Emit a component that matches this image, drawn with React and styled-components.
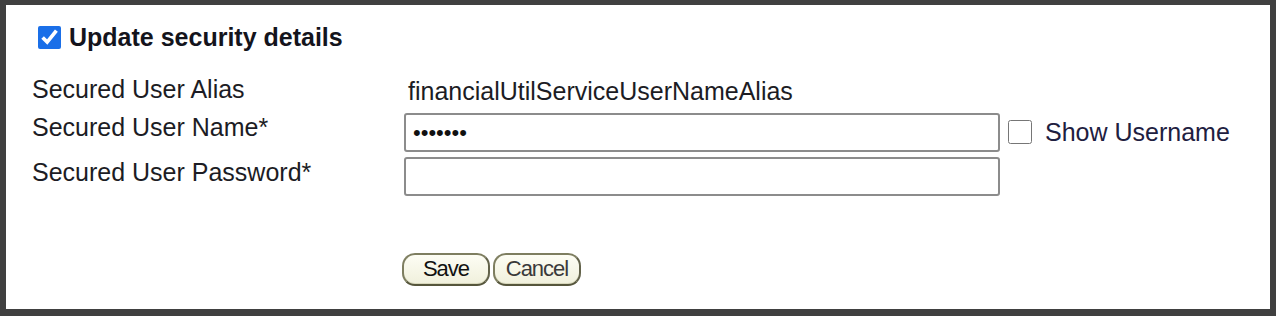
import React from 'react';
import styled, { createGlobalStyle } from 'styled-components';

const GlobalStyle = createGlobalStyle`
  html, body {
    margin: 0;
    padding: 0;
    background: #404040;
  }
  body {
    font-family: "Liberation Sans", Arial, sans-serif;
  }
`;

const Frame = styled.div`
  box-sizing: border-box;
  width: 1276px;
  height: 316px;
  padding: 5px 6px 7px 6px;
  background: #404040;
`;

const Panel = styled.div`
  height: 100%;
  background: #ffffff;
  box-sizing: border-box;
  padding: 17px 0 0 26px;
  color: #1c1c24;
  font-size: 25px;
`;

const Heading = styled.label`
  display: flex;
  align-items: center;
  gap: 8px;
  margin-left: 6px;
  font-weight: bold;
  font-size: 25px;
  line-height: 30px;
  color: #14141c;
`;

const Check = styled.input.attrs({ type: 'checkbox' })`
  width: 23px;
  height: 23px;
  margin: 0;
  accent-color: #1a6fe8;
`;

const Form = styled.div`
  display: grid;
  grid-template-columns: 372px 596px auto;
  row-gap: 5px;
  margin-top: 21px;
  align-items: start;
`;

const Label = styled.div`
  line-height: 29px;
  padding-top: ${p => p.$top || 0}px;
  padding-bottom: ${p => p.$bottom || 0}px;
`;

const Value = styled.div`
  line-height: 29px;
  padding: 4px 0 0 4px;
  grid-column: 2 / 4;
`;

const TextBox = styled.input`
  box-sizing: border-box;
  width: 596px;
  height: 39px;
  margin: 0;
  padding: 0 7px;
  border: 2px solid #8c8c8c;
  border-radius: 3px;
  font-family: "Liberation Sans", Arial, sans-serif;
  font-size: 22px;
  color: #111;
  background: #fff;
  outline: none;
`;

const ShowToggle = styled.label`
  display: flex;
  align-items: center;
  gap: 13px;
  margin-left: 8px;
  height: 39px;
  color: #1e2040;
  font-size: 25px;
`;

const Plain = styled.input.attrs({ type: 'checkbox' })`
  width: 24px;
  height: 24px;
  margin: 0;
  margin-top: -2px;
`;

const Buttons = styled.div`
  display: flex;
  gap: 3px;
  margin: 57px 0 0 370px;
`;

const Button = styled.button`
  box-sizing: border-box;
  width: 88px;
  height: 33px;
  padding: 0 0 1px;
  border: 2px solid #7e7e60;
  border-bottom-color: #56563c;
  border-right-color: #62624a;
  border-radius: 13px;
  background: linear-gradient(#fdfdf4, #f0f0dc);
  font-family: "Liberation Sans", Arial, sans-serif;
  font-size: 22px;
  letter-spacing: -1px;
  color: ${p => (p.$muted ? '#3a3a3a' : '#111')};
  box-shadow: inset 0 -1px 0 #d8d8bc;
  cursor: pointer;
`;

export default function App() {
  return (
    <>
      <GlobalStyle />
      <Frame>
        <Panel>
          <Heading>
            <Check defaultChecked />
            Update security details
          </Heading>

          <Form>
            <Label $top={2} $bottom={4}>Secured User Alias</Label>
            <Value>financialUtilServiceUserNameAlias</Value>

            <Label>Secured User Name*</Label>
            <TextBox type="password" defaultValue="1234567" />
            <ShowToggle>
              <Plain />
              Show Username
            </ShowToggle>

            <Label $top={1}>Secured User Password*</Label>
            <TextBox type="password" defaultValue="" />
            <div />
          </Form>

          <Buttons>
            <Button>Save</Button>
            <Button $muted>Cancel</Button>
          </Buttons>
        </Panel>
      </Frame>
    </>
  );
}
